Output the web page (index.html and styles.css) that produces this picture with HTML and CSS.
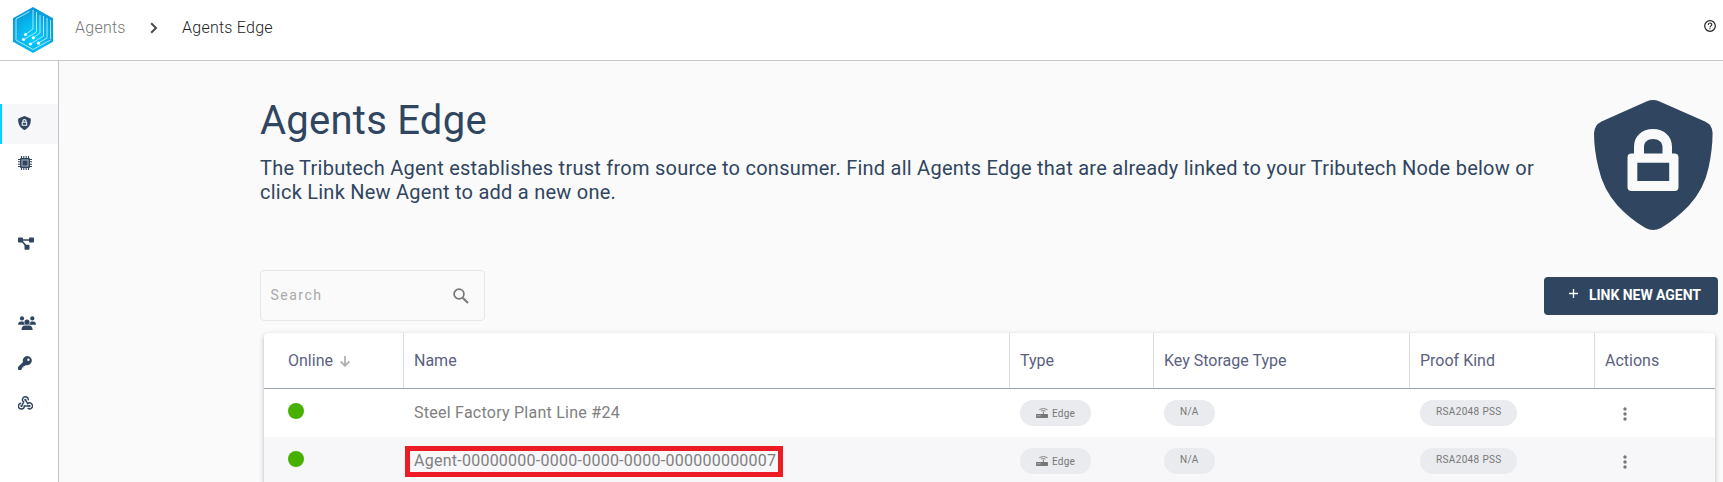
FILE: index.html
```html
<!DOCTYPE html>
<html lang="en">
<head>
<meta charset="utf-8">
<title>Agents Edge</title>
<link rel="stylesheet" href="styles.css">
</head>
<body>
<svg class="defs" width="0" height="0" aria-hidden="true">
  <symbol id="shield" viewBox="0 0 119 130">
    <path fill-rule="evenodd" d="M53 1.200Q59 -1.200 65 1.200L111 21.500Q118.500 25 118.600 33Q118.500 50 114.500 68Q110 89 95 105.500Q82 119 67 128Q59 132 51.500 128Q36 119 23.500 105.500Q9 89 4.500 68Q0 50 0 33Q.500 25 7.500 21.500ZM40 53.500H37.500Q33.500 53.500 33.500 57.500V87Q33.500 91 37.500 91H80.500Q84.500 91 84.500 87V57.500Q84.500 53.500 80.500 53.500H78V47C78 36 70 29 59 29S40 36 40 47ZM50 53.500V47C50 42 53.500 39 59 39S68.500 42 68.500 47V53.500ZM43.300 62.700H75.200V81H43.300Z"/>
  </symbol>
  <symbol id="router" viewBox="0 0 12 10">
    <path d="M.8 6H6.900V3.800H7.900V6H11.200Q12 6 12 6.800V9.200Q12 10 11.200 10H.8Q0 10 0 9.200V6.800Q0 6 .8 6Z"/>
    <path d="M1.300 7.800H2.500M3.300 7.800H4.500" stroke="#eaebef" stroke-width=".8"/>
    <path d="M3.300 1.700Q7.400 -1 11.500 1.700M5.200 3.200Q7.400 1.700 9.600 3.200" fill="none" stroke="currentColor" stroke-width=".9"/>
  </symbol>
</svg>

<header class="topbar">
  <svg class="logo" viewBox="0 0 40 46">
    <defs><radialGradient id="lg" cx=".5" cy=".65" r=".6"><stop offset="0" stop-color="#00cfff"/><stop offset=".5" stop-color="#08b9ee"/><stop offset="1" stop-color="#0899dc"/></radialGradient></defs>
    <path fill="url(#lg)" d="M20 0L40 11.300V34.700L20 46L0 34.700V11.300Z"/>
    <g fill="none" stroke="#a9e6fb" stroke-width="1">
      <path d="M16.500 4.500L3 12V33L20 42.500L37.500 33"/>
      <path d="M20 3V22L12.500 27.500M23.500 5V25L11 32.500M27 8V26L20.500 30.500M30.500 9V29L17.500 37M34 11V31L25.500 36M37.500 13V32"/>
    </g>
    <g fill="#fff"><circle cx="12.500" cy="27.500" r="1.600"/><circle cx="10.500" cy="32.500" r="1.600"/><circle cx="20.300" cy="30.800" r="1.600"/><circle cx="17.300" cy="37" r="1.600"/><circle cx="25.500" cy="36.200" r="1.600"/></g>
  </svg>
  <nav class="crumbs">
    <a class="crumb-parent">Agents</a>
    <svg class="chevron" viewBox="0 0 8 12"><path d="M1.200 1.200L6 6L1.200 10.800" fill="none" stroke="#4b4b4f" stroke-width="2"/></svg>
    <span class="crumb-current">Agents Edge</span>
  </nav>
  <svg class="help" viewBox="0 0 12 12"><circle cx="6" cy="6" r="5.300" fill="none" stroke="#222" stroke-width="1.200"/><path d="M4.200 4.900C4.200 2.500 7.800 2.500 7.800 4.700C7.800 5.900 6 6 6 7.400M6 8.200V9.300" fill="none" stroke="#222" stroke-width="1.100"/></svg>
</header>

<div class="body">
  <aside class="sidebar">
    <a class="side-item active"><svg class="ico-shield"><use href="#shield"/></svg></a>
    <a class="side-item"><svg class="ico" viewBox="0 0 14 14"><path d="M3.500 0V14M5.800 0V14M8.200 0V14M10.500 0V14M0 3.500H14M0 5.800H14M0 8.200H14M0 10.500H14" stroke="#2f4560" stroke-width="1.100"/><rect x="2" y="2" width="10" height="10" rx="1"/><rect x="4" y="4" width="6" height="6" fill="#2f4560" stroke="#a9b3bf" stroke-width="1"/></svg></a>
    <a class="side-item gap"><svg class="ico-net" viewBox="0 0 16 13"><path d="M3 3H13M3 3L9 10" stroke="#2f4560" stroke-width="1.500"/><rect width="5" height="5" y=".500" rx=".8"/><rect x="11" y=".500" width="5" height="5" rx=".8"/><rect x="6.500" y="7.700" width="5" height="5" rx=".8"/></svg></a>
    <a class="side-item gap"><svg class="ico-users" viewBox="0 0 18 14"><circle cx="4" cy="2.400" r="2.100"/><circle cx="14.300" cy="2.400" r="2.100"/><path d="M0 8.700Q.3 5.400 3 5.400H5.500Q6 7.500 7 8.700ZM18 8.700Q17.700 5.400 15.300 5.400H12.700Q12.200 7.500 11 8.700Z"/><circle cx="9" cy="6.200" r="2.600"/><path d="M3.500 14Q3.600 9.500 7 9.500H11Q14.400 9.500 14.600 14Z"/></svg></a>
    <a class="side-item"><svg class="ico" viewBox="0 0 14 14"><path fill-rule="evenodd" d="M9.400 0A4.600 4.600 0 1 1 7.900 9L6.800 10.100H5.400V11.600H3.900V13.100L3 14H.6L0 13.400V11.100L5 6.100A4.600 4.600 0 0 1 9.400 0ZM10.400 2.500A1.200 1.200 0 1 0 10.400 4.900A1.200 1.200 0 1 0 10.400 2.500Z"/></svg></a>
    <a class="side-item"><svg class="ico-hook" viewBox="0 0 16 14"><g fill="none" stroke="#2f4560" stroke-width="1.500"><path d="M10.900 4.200A3.100 3.100 0 1 0 6.100 6L4 10"/><path d="M3.500 7.200A3.100 3.100 0 1 0 6.700 10.200H12"/><path d="M7.700 3.500L10.300 7.700A3.100 3.100 0 1 1 10.200 12.400"/></g><circle cx="7.800" cy="3.600" r="1.200"/><circle cx="3.700" cy="10.300" r="1.200"/><circle cx="12.200" cy="10.300" r="1.200"/></svg></a>
  </aside>

  <main class="main">
    <section class="hero">
      <div class="hero-text">
        <h1 class="title">Agents Edge</h1>
        <p class="lead">The Tributech Agent establishes trust from source to consumer. Find all Agents Edge that are already linked to your Tributech Node below or click Link New Agent to add a new one.</p>
      </div>
      <svg class="hero-shield"><use href="#shield"/></svg>
    </section>

    <section class="toolbar">
      <label class="search"><span class="search-text">Search</span><svg class="search-icon" viewBox="0 0 16 16"><circle cx="6" cy="6" r="4.900" fill="none" stroke="#777" stroke-width="1.700"/><path d="M9.700 9.700L15 15" stroke="#777" stroke-width="2"/></svg></label>
      <button class="link-btn"><svg class="plus" viewBox="0 0 9 9"><path d="M4.500 0V9M0 4.500H9" stroke="#fff" stroke-width="1.300"/></svg><span>LINK NEW AGENT</span></button>
    </section>

    <section class="table">
      <div class="row head">
        <div class="cell first">Online<svg class="sort" viewBox="0 0 10 11"><path d="M5 0V10M.700 5.500L5 9.800L9.300 5.500" fill="none" stroke="#b0b0b0" stroke-width="1.800"/></svg></div>
        <div class="cell">Name</div>
        <div class="cell">Type</div>
        <div class="cell">Key Storage Type</div>
        <div class="cell">Proof Kind</div>
        <div class="cell">Actions</div>
      </div>
      <div class="row">
        <div class="cell first"><span class="dot"></span></div>
        <div class="cell name"><span class="plain">Steel Factory Plant Line #24</span></div>
        <div class="cell"><span class="chip edge"><svg class="router"><use href="#router"/></svg>Edge</span></div>
        <div class="cell"><span class="chip na">N/A</span></div>
        <div class="cell"><span class="chip rsa">RSA2048 PSS</span></div>
        <div class="cell"><svg class="more" viewBox="0 0 4 14"><circle cx="2" cy="2" r="1.700"/><circle cx="2" cy="7" r="1.700"/><circle cx="2" cy="12" r="1.700"/></svg></div>
      </div>
      <div class="row alt">
        <div class="cell first"><span class="dot"></span></div>
        <div class="cell name"><span class="marked">Agent-00000000-0000-0000-0000-000000000007</span></div>
        <div class="cell"><span class="chip edge"><svg class="router"><use href="#router"/></svg>Edge</span></div>
        <div class="cell"><span class="chip na">N/A</span></div>
        <div class="cell"><span class="chip rsa">RSA2048 PSS</span></div>
        <div class="cell"><svg class="more" viewBox="0 0 4 14"><circle cx="2" cy="2" r="1.700"/><circle cx="2" cy="7" r="1.700"/><circle cx="2" cy="12" r="1.700"/></svg></div>
      </div>
    </section>
  </main>
</div>
</body>
</html>
```
FILE: styles.css
```css
* { box-sizing: border-box; }
body { margin: 0; height: 482px; overflow: hidden; display: flex; flex-direction: column; font-family: Roboto, sans-serif; background: #fafafa; color: #2f4560; }
svg { display: block; flex: none; }
.defs { position: absolute; }

.topbar { flex: none; height: 61px; display: flex; align-items: flex-start; background: #fff; border-bottom: 1px solid #c6c6c6; }
.logo { width: 40px; height: 46px; margin: 7px 0 0 13px; }
.crumbs { display: flex; align-items: center; margin: 18px 0 0 22px; height: 20px; font-size: 16px; line-height: 20px; font-weight: 300; }
.crumb-parent { width: 75px; color: #777; letter-spacing: .25px; }
.chevron { width: 8px; height: 12px; margin-right: 24px; }
.crumb-current { color: #222; letter-spacing: .25px; }
.help { width: 12px; height: 12px; margin: 20px 7.5px 0 auto; }

.body { flex: 1; min-height: 0; display: flex; }
.sidebar { width: 59px; flex: none; background: #fff; border-right: 1px solid #c4c4c4; padding-top: 43px; fill: #2f4560; }
.side-item { height: 40px; padding: 0 0 2px 18px; display: flex; align-items: center; }
.side-item.gap { margin-top: 40px; }
.side-item.active { background: #f7f7fa; border-left: 2px solid #00d4ff; padding-left: 16px; }
.ico { width: 14px; height: 14px; }
.ico-shield { width: 13px; height: 14px; }
.ico-net { width: 16px; height: 13px; }
.ico-users { width: 18px; height: 14px; }
.ico-hook { width: 15px; height: 14px; }

.main { flex: 1; min-width: 0; padding-left: 201px; }
.hero { display: flex; justify-content: space-between; height: 209px; padding: 36px 10px 0 0; }
.hero-text { width: 1290px; }
.title { margin: 0; font-size: 40px; line-height: 48px; font-weight: 400; letter-spacing: .25px; }
.lead { margin: 11px 0 0; font-size: 20px; line-height: 24px; letter-spacing: .245px; }
.hero-shield { width: 119px; height: 130px; margin-top: 3px; fill: #2f4560; }

.toolbar { display: flex; justify-content: space-between; align-items: center; height: 51px; padding-right: 5px; }
.search { width: 225px; height: 51px; border: 1px solid #e6e6e6; border-radius: 4px; padding: 0 15px 0 9.5px; display: flex; align-items: center; justify-content: space-between; font-size: 14px; letter-spacing: 1.5px; color: #a8a8a8; }
.search-text { padding-bottom: 2px; }
.search-icon { width: 16px; height: 16px; }
.link-btn { width: 174px; height: 38px; border: 0; border-radius: 4px; background: #2f4560; color: #fff; padding: 0 0 2px 25px; display: flex; align-items: center; white-space: nowrap; font: 700 14px/20px Roboto, sans-serif; letter-spacing: -.04px; }
.plus { width: 9px; height: 9px; margin: 0 11px 2px 0; }

.table { width: 1451px; margin: 12px 0 0 4px; background: #fff; border-radius: 4px 4px 0 0; box-shadow: 0 2px 5px rgba(0,0,0,.26); }
.row { display: grid; grid-template-columns: 140px 606px 144px 256px 185px 1fr; height: 48px; }
.head { height: 56px; border-bottom: 1px solid #98a3b0; font-size: 16px; color: #5b5f82; }
.cell { display: flex; align-items: center; padding-left: 10px; border-right: 1px solid transparent; }
.head .cell { border-right-color: #dcdcdc; }
.head .cell:last-child { border-right: 0; }
.cell.first { padding-left: 24px; }
.alt { background: #f7f7fa; }
.sort { width: 10px; height: 11px; margin: 2px 0 0 7px; }
.dot { width: 16px; height: 16px; border-radius: 50%; background: #48b000; margin-bottom: 4px; }
.name { font-size: 16px; color: #808080; letter-spacing: .25px; }
.plain { padding-bottom: 2px; }
.marked { display: flex; align-items: center; flex: none; width: 378px; height: 31px; margin: 1px 0 0 -9px; padding: 0 0 2px 4px; border: 5px solid #ed1c24; white-space: nowrap; }
.chip { height: 26px; border-radius: 13px; background: #eaebef; color: #777; font-size: 10px; display: flex; align-items: center; padding: 0 16px; white-space: nowrap; letter-spacing: .25px; }
.chip.na, .chip.rsa { padding-bottom: 3px; }
.edge { width: 71px; }
.na { width: 51px; }
.rsa { width: 97px; letter-spacing: .35px; }
.router { width: 12px; height: 10px; margin-right: 4px; fill: #777; color: #777; }
.more { width: 4px; height: 14px; margin: 2px 0 0 18px; fill: #777; }
```
